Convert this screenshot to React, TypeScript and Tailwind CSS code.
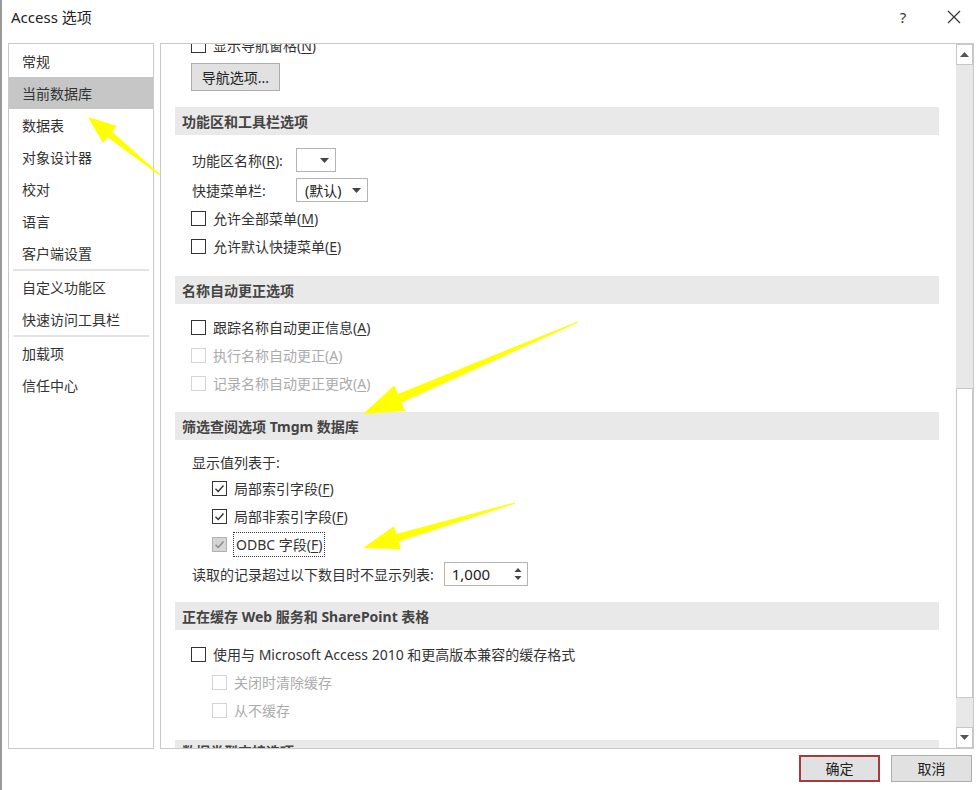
import React from "react";

type Pt = [number, number];

function arrowPoints(tip: Pt, tail: Pt, headLen: number, headHalf: number, shaftHalf: number, tailHalf: number) {
  const dx = tail[0] - tip[0];
  const dy = tail[1] - tip[1];
  const len = Math.hypot(dx, dy);
  const ux = dx / len;
  const uy = dy / len;
  const px = -uy;
  const py = ux;
  const bx = tip[0] + ux * headLen;
  const by = tip[1] + uy * headLen;
  const pts: Pt[] = [
    tip,
    [bx + px * headHalf, by + py * headHalf],
    [bx + px * shaftHalf, by + py * shaftHalf],
    [tail[0] + px * tailHalf, tail[1] + py * tailHalf],
    [tail[0] - px * tailHalf, tail[1] - py * tailHalf],
    [bx - px * shaftHalf, by - py * shaftHalf],
    [bx - px * headHalf, by - py * headHalf],
  ];
  return pts.map((p) => `${p[0].toFixed(1)},${p[1].toFixed(1)}`).join(" ");
}

function U({ c }: { c: string }) {
  return <span className="underline underline-offset-[2px]">{c}</span>;
}

function Box({ checked, disabled, gray }: { checked?: boolean; disabled?: boolean; gray?: boolean }) {
  const border = disabled ? "border-[#d4d4d4]" : gray ? "border-[#b0b0b0]" : "border-[#333333]";
  const bg = gray ? "bg-[#d6d6d6]" : "bg-white";
  return (
    <span className={`w-[15px] h-[15px] border ${border} ${bg} flex items-center justify-center shrink-0`}>
      {checked && (
        <svg width="13" height="13" viewBox="0 0 13 13">
          <polyline
            points="2.5,6.8 5.2,9.5 10.5,3.5"
            fill="none"
            stroke={gray ? "#8a8a8a" : "#333333"}
            strokeWidth="1.4"
          />
        </svg>
      )}
    </span>
  );
}

function CheckRow({
  children,
  checked,
  disabled,
  gray,
  indent,
  focus,
}: {
  children: React.ReactNode;
  checked?: boolean;
  disabled?: boolean;
  gray?: boolean;
  indent?: boolean;
  focus?: boolean;
}) {
  return (
    <div className={`h-[28px] flex items-center ${indent ? "pl-[51px]" : "pl-[30px]"}`}>
      <Box checked={checked} disabled={disabled} gray={gray} />
      <span
        className={`ml-[6px] ${disabled ? "text-[#ababab]" : "text-[#333333]"} ${
          focus ? "border border-dotted border-[#333] px-[2px] py-[1px]" : "px-[1px]"
        }`}
      >
        {children}
      </span>
    </div>
  );
}

function Header({ children, mt }: { children: React.ReactNode; mt: string }) {
  return (
    <div
      className={`${mt} ml-[14px] mr-[17px] h-[28px] bg-[#e9e9e9] flex items-center pl-[7px] font-bold text-[#444444]`}
    >
      {children}
    </div>
  );
}

function Caret() {
  return (
    <svg width="9" height="5" viewBox="0 0 9 5">
      <polygon points="0,0 9,0 4.5,5" fill="#444" />
    </svg>
  );
}

const navItems1 = ["常规", "当前数据库", "数据表", "对象设计器", "校对", "语言", "客户端设置"];
const navItems2 = ["自定义功能区", "快速访问工具栏"];
const navItems3 = ["加载项", "信任中心"];

function NavItem({ label, selected }: { label: string; selected?: boolean }) {
  return (
    <div className={`h-[32px] flex items-center pl-[13px] text-[#333] ${selected ? "bg-[#c6c6c6]" : ""}`}>
      {label}
    </div>
  );
}

function NavSep() {
  return <div className="h-[2px] mx-[4px] bg-[#e3e3e3]" />;
}

export default function App() {
  return (
    <div className="relative w-[978px] h-[790px] bg-white overflow-hidden border-l-2 border-[#9a9a9a] text-[14px] font-['Noto_Sans','Noto_Sans_CJK_SC',sans-serif] text-[#333]">
      {/* title bar */}
      <div className="h-[43px] flex items-start pt-[6px] pl-[9px]">
        <div className="text-[15px] leading-[22px] text-[#222]">Access 选项</div>
        <div className="flex-1" />
        <div className="w-[20px] text-center text-[15px] leading-[22px] text-[#333] mr-[34px]">?</div>
        <svg className="mt-[4px] mr-[17px]" width="14" height="14" viewBox="0 0 14 14">
          <path d="M1 1 L13 13 M13 1 L1 13" stroke="#333" strokeWidth="1.2" />
        </svg>
      </div>

      {/* main row */}
      <div className="h-[706px] flex pl-[6px] pr-[4px]">
        {/* nav */}
        <div className="w-[146px] border border-[#c9c9c9] pt-[1px]">
          {navItems1.map((n) => (
            <NavItem key={n} label={n} selected={n === "当前数据库"} />
          ))}
          <NavSep />
          {navItems2.map((n) => (
            <NavItem key={n} label={n} />
          ))}
          <NavSep />
          {navItems3.map((n) => (
            <NavItem key={n} label={n} />
          ))}
        </div>

        {/* right panel */}
        <div className="ml-[6px] flex-1 border border-[#c9c9c9] flex overflow-hidden">
          <div className="flex-1 overflow-hidden">
            <div className="-mt-[13px]">
              <CheckRow>
                显示导航窗格(<U c="N" />)
              </CheckRow>
              <div className="mt-[4px] ml-[30px] w-[89px] h-[28px] bg-[#e1e1e1] border border-[#adadad] flex items-center justify-center text-[#222]">
                导航选项...
              </div>

              <Header mt="mt-[16px]">功能区和工具栏选项</Header>
              <div className="mt-[13px] h-[24px] flex items-center pl-[31px]">
                <span className="w-[104px]">
                  功能区名称(<U c="R" />):
                </span>
                <div className="w-[40px] h-[24px] border border-[#b4b4b4] flex items-center justify-end pr-[6px]">
                  <Caret />
                </div>
              </div>
              <div className="mt-[6px] h-[24px] flex items-center pl-[31px]">
                <span className="w-[104px]">快捷菜单栏:</span>
                <div className="w-[72px] h-[24px] border border-[#b4b4b4] flex items-center justify-between pl-[8px] pr-[6px]">
                  <span className="text-[#222]">(默认)</span>
                  <Caret />
                </div>
              </div>
              <div className="mt-[2px]">
                <CheckRow>
                  允许全部菜单(<U c="M" />)
                </CheckRow>
                <CheckRow>
                  允许默认快捷菜单(<U c="E" />)
                </CheckRow>
              </div>

              <Header mt="mt-[16px]">名称自动更正选项</Header>
              <div className="mt-[9px]">
                <CheckRow>
                  跟踪名称自动更正信息(<U c="A" />)
                </CheckRow>
                <CheckRow disabled>
                  执行名称自动更正(<U c="A" />)
                </CheckRow>
                <CheckRow disabled>
                  记录名称自动更正更改(<U c="A" />)
                </CheckRow>
              </div>

              <Header mt="mt-[15px]">筛选查阅选项 Tmgm 数据库</Header>
              <div className="mt-[10px] h-[24px] flex items-center pl-[31px]">显示值列表于:</div>
              <CheckRow indent checked>
                局部索引字段(<U c="F" />)
              </CheckRow>
              <CheckRow indent checked>
                局部非索引字段(<U c="F" />)
              </CheckRow>
              <CheckRow indent checked gray focus>
                ODBC 字段(<U c="F" />)
              </CheckRow>
              <div className="mt-[4px] h-[24px] flex items-center pl-[31px]">
                <span>读取的记录超过以下数目时不显示列表:</span>
                <div className="ml-[10px] w-[84px] h-[24px] border border-[#b4b4b4] flex items-center justify-between pl-[7px] pr-[5px]">
                  <span className="text-[#222] text-[15px]">1,000</span>
                  <svg width="8" height="14" viewBox="0 0 8 14">
                    <polygon points="4,1 7.5,5 0.5,5" fill="#444" />
                    <polygon points="0.5,9 7.5,9 4,13" fill="#444" />
                  </svg>
                </div>
              </div>

              <Header mt="mt-[16px]">正在缓存 Web 服务和 SharePoint 表格</Header>
              <div className="mt-[10px]">
                <CheckRow>使用与 Microsoft Access 2010 和更高版本兼容的缓存格式</CheckRow>
                <CheckRow indent disabled>
                  关闭时清除缓存
                </CheckRow>
                <CheckRow indent disabled>
                  从不缓存
                </CheckRow>
              </div>

              <div className="mt-[16px] ml-[14px] mr-[17px] h-[28px] bg-[#e9e9e9] flex items-start pt-[1px] pl-[7px] font-bold text-[#444444]">
                数据类型支持选项
              </div>
              <div className="h-[60px]" />
            </div>
          </div>

          {/* scrollbar */}
          <div className="w-[17px] flex flex-col bg-[#e8e8e8]">
            <div className="h-[21px] bg-white border border-[#c8c8c8] flex items-center justify-center">
              <svg width="9" height="5" viewBox="0 0 9 5">
                <polygon points="4.5,0 9,5 0,5" fill="#555" />
              </svg>
            </div>
            <div className="h-[323px]" />
            <div className="h-[310px] bg-white border border-[#c8c8c8]" />
            <div className="flex-1" />
            <div className="h-[21px] bg-white border border-[#c8c8c8] flex items-center justify-center">
              <svg width="9" height="5" viewBox="0 0 9 5">
                <polygon points="0,0 9,0 4.5,5" fill="#555" />
              </svg>
            </div>
          </div>
        </div>
      </div>

      {/* footer */}
      <div className="flex justify-end pt-[6px] pr-[6px]">
        <div className="w-[81px] h-[27px] bg-[#e1e1e1] border-2 border-[#a83a3e] flex items-center justify-center text-[#222]">
          确定
        </div>
        <div className="ml-[11px] w-[81px] h-[27px] bg-[#e1e1e1] border border-[#adadad] flex items-center justify-center text-[#222]">
          取消
        </div>
      </div>

      {/* annotation arrows */}
      <svg className="absolute left-0 top-0 pointer-events-none" width="978" height="790" viewBox="0 0 978 790">
        <polygon points={arrowPoints([86, 117], [158, 175], 28, 11, 3.5, 0.6)} fill="#ffff00" />
        <polygon points={arrowPoints([361, 414], [576, 322], 40, 14, 4.5, 0.6)} fill="#ffff00" />
        <polygon points={arrowPoints([361, 548], [513, 503], 36, 12, 4, 0.6)} fill="#ffff00" />
      </svg>
    </div>
  );
}
